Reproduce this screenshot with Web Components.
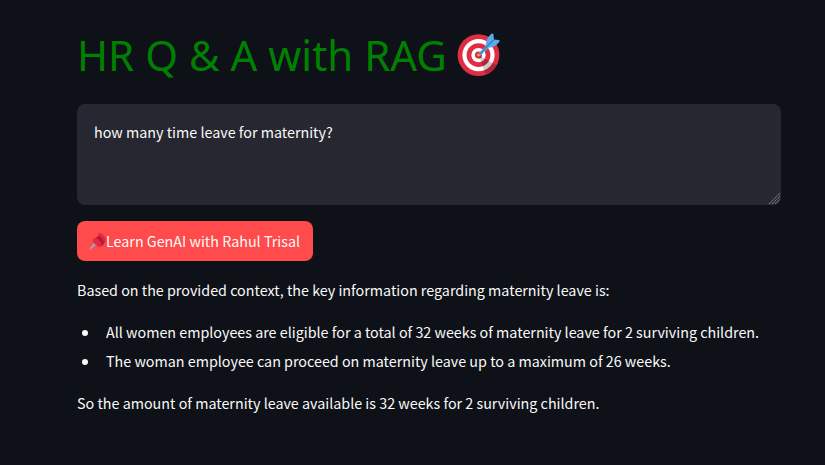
<!DOCTYPE html>
<html lang="en">
<head>
<meta charset="utf-8">
<title>HR Q &amp; A with RAG</title>
<style>
html, body { margin: 0; height: 100%; background: #0e1117; overflow: hidden; }
</style>
</head>
<body>
<qa-page></qa-page>
<script>
class Base extends HTMLElement {
  constructor() {
    super();
    this.attachShadow({ mode: 'open' }).innerHTML = this.constructor.markup;
  }
}

class TargetIcon extends Base {
  static markup = `<style>:host{display:block;width:43px;height:43px}svg{display:block}</style>
<svg width="43" height="43" viewBox="0 0 36 36" aria-hidden="true">
<circle cx="18" cy="18.5" r="17.5" fill="#dd2e44"/>
<circle cx="18" cy="18.5" r="13.5" fill="#fff"/>
<circle cx="18" cy="18.5" r="10" fill="#dd2e44"/>
<circle cx="18" cy="18.5" r="6" fill="#fff"/>
<circle cx="18" cy="18.5" r="3" fill="#dd2e44"/>
<path d="M18.2 18.7 24 34.4A17.5 17.5 0 0 0 33.2 27z" opacity=".2"/>
<path d="M18.2 17 27.5 7.6l1.8 1.9-9.4 9.4c-.5.5-1.4.5-1.8 0s-.4-1.4.1-1.9z" fill="#55acee"/>
<path d="M24.6 11.5c-1.2-1.2-.2-5.3 1.4-8l2.8-2.8c.6-.6 1.5-.4 1.7.3l.5 4.9-5.1 5.2c-.4.6-.9.8-1.3.4zM24.7 11.6c1.2 1.2 5.3.3 8-1.4l2.6-2.7c.6-.6.4-1.5-.4-1.6L31 5.5l-5.5 5.2c-.5.3-.9.6-.8.9z" fill="#55acee"/>
<path d="M18.500 18 30 6.2" stroke="#3a87c2" stroke-width="1.2" fill="none" stroke-linecap="round"/>
<circle cx="18" cy="18.500" r="1.1" fill="#ffac33"/>
</svg>`;
}
class PinIcon extends Base {
  static markup = `<style>:host{display:block;width:17px;height:17px;margin:2px 0 0 -1px}svg{display:block}</style>
<svg width="17" height="17" viewBox="0 0 36 36" aria-hidden="true">
<path d="M13 18 .8 34Q.5 36 2.500 35.200L18 23z" fill="#99aab5"/>
<path d="M20.5 5.5 35 17 28 28 10 14z" fill="#be1931"/>
<path d="M20 .8c2-2 7 .2 11 4s6 8.600 4 11-6 .7-10-3.500S17.700 3.300 20 .8z" fill="#dd2e44"/>
<path d="M9 12.500c3-3 9-.5 12.500 3s6.500 10 3.500 13-8-.5-12-4.500-6.800-8.700-4-11.500z" fill="#dd2e44"/>
<path d="M18 11 22 6 30 13 25 18z" fill="#be1931"/>
</svg>`;
}
class PageHeading extends Base {
  static markup = `<style>
:host{display:flex;align-items:flex-start;height:104px;box-sizing:border-box;padding-top:33px;color:#008000}
h1{margin:-7px 0 0;font:400 42px/58px "Noto Sans",sans-serif;white-space:nowrap;width:380px}
</style><h1><slot></slot></h1><target-icon></target-icon>`;
}
class QuestionBox extends Base {
  static markup = `<style>
:host{display:flex;justify-content:space-between;box-sizing:border-box;width:704px;height:101px;border-radius:8px;background:#262730;padding:15px 0 0 17px;line-height:25px;overflow:hidden}
svg{align-self:flex-end;display:block}
</style><div role="textbox"><slot></slot></div>
<svg width="15" height="15" viewBox="0 0 15 15" aria-hidden="true"><path d="M3 14 14 3M6 14 14 6M9 14 14 9M12 14 14 12" stroke="#77787d" stroke-width="1.1" stroke-dasharray="1.4 .7"/></svg>`;
}
class PinButton extends Base {
  static markup = `<style>
:host{display:block;margin-top:16px;height:40px}
button{box-sizing:border-box;width:236px;height:40px;border:0;border-radius:8px;background:#ff4b4b;color:#fafafa;font:inherit;line-height:25px;padding:0 0 2px 13px;display:flex;align-items:center;white-space:nowrap}
</style><button><pin-icon></pin-icon><span><slot></slot></span></button>`;
}
class AnswerText extends Base {
  static markup = `<style>
:host{display:block;margin-top:16px;white-space:nowrap}
::slotted(p){margin:0;height:26px;line-height:26px}
</style><slot></slot>`;
}
class AnswerItem extends Base {
  static markup = `<style>
:host{display:grid;grid-template-columns:29px 1fr;align-items:center;height:29px;line-height:26px;white-space:nowrap}
i{width:6px;height:6px;border-radius:50%;background:#fafafa;margin:2px 0 0 5px}
</style><i></i><span><slot></slot></span>`;
}
class AnswerList extends Base {
  static markup = `<style>:host{display:flex;flex-direction:column;margin:14px 0 -1px}</style><slot></slot>`;
}
class QaPage extends Base {
  static markup = `<style>
:host{display:block;box-sizing:border-box;width:825px;height:465px;padding:0 44px 0 77px;background:#0e1117;color:#fafafa;font:400 14.32px/26px "Noto Sans CJK SC",sans-serif}
</style>
<page-heading>HR Q &amp; A with RAG</page-heading>
<question-box>how many time leave for maternity?</question-box>
<pin-button>Learn GenAI with Rahul Trisal</pin-button>
<answer-text><p>Based on the provided context, the key information regarding maternity leave is:</p></answer-text>
<answer-list>
<answer-item>All women employees are eligible for a total of 32 weeks of maternity leave for 2 surviving children.</answer-item>
<answer-item>The woman employee can proceed on maternity leave up to a maximum of 26 weeks.</answer-item>
</answer-list>
<answer-text><p>So the amount of maternity leave available is 32 weeks for 2 surviving children.</p></answer-text>`;
}
customElements.define('target-icon', TargetIcon);
customElements.define('pin-icon', PinIcon);
customElements.define('page-heading', PageHeading);
customElements.define('question-box', QuestionBox);
customElements.define('pin-button', PinButton);
customElements.define('answer-text', AnswerText);
customElements.define('answer-item', AnswerItem);
customElements.define('answer-list', AnswerList);
customElements.define('qa-page', QaPage);
</script>
</body>
</html>
